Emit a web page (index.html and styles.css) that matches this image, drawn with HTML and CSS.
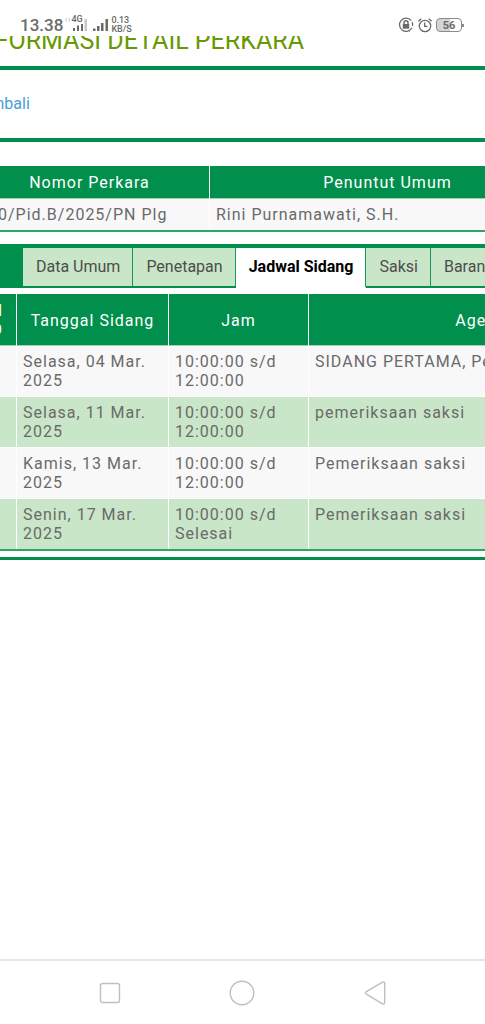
FILE: index.html
```html
<!DOCTYPE html>
<html lang="id">
<head>
<meta charset="utf-8">
<meta name="viewport" content="width=device-width, initial-scale=1">
<title>Informasi Detail Perkara</title>
<link rel="stylesheet" href="styles.css">
</head>
<body>
<header class="status">
  <span class="clock">13.38</span>
  <svg class="vib" width="6" height="6" viewBox="0 0 6 6"><path d="M1.5 1Q0 2.500 1.500 4.500M4 1Q5.500 2.500 4 4.500" fill="none" stroke="#c2c2c2"/></svg>
  <span class="cell">
    <span class="net">4G</span>
    <svg width="16" height="12" viewBox="0 0 16 12"><path d="M1 9h2v3H1zM5 6.500h2V12H5zM9 4h2v8H9z" fill="#686b68"/><path d="M12.500 0H15v12h-2.500z" fill="#c8c8c8"/></svg>
  </span>
  <svg class="bars" width="16" height="12" viewBox="0 0 16 12"><path d="M0 9.500h2.500V12H0zM4 7h2.500v5H4zM8 4h2.500v8H8zM12.500 0H15v12h-2.500z" fill="#686b68"/></svg>
  <span class="speed"><span>0.13</span><span>KB/S</span></span>
  <span class="status-right">
    <svg width="16" height="16" viewBox="0 0 16 16" fill="none" stroke="#686b68"><path d="M14 10.800A6.600 6.600 0 1 1 13.200 3.600" stroke-width="1.300"/><path d="M10.800 14.200l1-.6M14.200 5.200a7 7 0 0 1 .3 4" stroke-width="1.300"/><rect x="4.800" y="7" width="6.400" height="4.700" fill="#686b68" stroke="none"/><path d="M6 7.500V5.800a2 2 0 0 1 4 0v1.700" stroke-width="1.400"/></svg>
    <svg width="16" height="16" viewBox="0 0 16 16" fill="none" stroke="#686b68" stroke-width="1.300"><circle cx="8" cy="9" r="5.700"/><path d="M7.700 5.500v3.800h2.800M1.300 4.300l3-2.600M14.700 4.300l-3-2.600"/></svg>
    <span class="battery">56</span>
  </span>
</header>

<main class="view">
  <div class="page">
    <h1>INFORMASI DETAIL PERKARA</h1>
    <div class="back"><a href="#">Kembali</a></div>

    <table class="grid case">
      <colgroup><col class="c-nomor"><col class="c-umum"><col></colgroup>
      <thead><tr><th>Nomor Perkara</th><th>Penuntut Umum</th><th></th></tr></thead>
      <tbody><tr><td class="case-no">0/Pid.B/2025/PN Plg</td><td>Rini Purnamawati, S.H.</td><td></td></tr></tbody>
    </table>

    <nav class="tabs">
      <button type="button">Data Umum</button>
      <button type="button">Penetapan</button>
      <button type="button" class="active" aria-current="page">Jadwal Sidang</button>
      <button type="button">Saksi</button>
      <button type="button">Barang Bukti</button>
    </nav>

    <div class="panel">
      <table class="grid schedule">
        <colgroup><col class="c-no"><col class="c-date"><col class="c-time"><col></colgroup>
        <thead><tr><th>N<br>O</th><th>Tanggal Sidang</th><th>Jam</th><th>Agenda</th></tr></thead>
        <tbody>
          <tr><td></td><td>Selasa, 04 Mar. 2025</td><td>10:00:00 s/d 12:00:00</td><td>SIDANG PERTAMA, Pembacaan</td></tr>
          <tr><td></td><td>Selasa, 11 Mar. 2025</td><td>10:00:00 s/d 12:00:00</td><td>pemeriksaan saksi</td></tr>
          <tr><td></td><td>Kamis, 13 Mar. 2025</td><td>10:00:00 s/d 12:00:00</td><td>Pemeriksaan saksi</td></tr>
          <tr><td></td><td>Senin, 17 Mar. 2025</td><td>10:00:00 s/d Selesai</td><td>Pemeriksaan saksi</td></tr>
        </tbody>
      </table>
    </div>
  </div>
</main>

<footer class="softkeys">
  <button type="button" aria-label="Recent apps"><svg width="22" height="22" viewBox="0 0 22 22"><rect x="1.500" y="1.500" width="19" height="19" rx="2"/></svg></button>
  <button type="button" aria-label="Home"><svg width="26" height="26" viewBox="0 0 26 26"><circle cx="13" cy="13" r="11.800"/></svg></button>
  <button type="button" aria-label="Back"><svg width="22" height="26" viewBox="0 0 22 26"><path d="M18.500 2.200L2 11.800q-1.400 1 0 2L18.500 23.800q2.200.8 2.200-1.500V3.700q0-2.300-2.200-1.500z"/></svg></button>
</footer>
</body>
</html>
```
FILE: styles.css
```css
* { box-sizing: border-box; }

body {
  margin: 0;
  min-height: 100vh;
  display: flex;
  flex-direction: column;
  overflow-x: hidden;
  background: #fff;
  color: #6a6a6a;
  font: 16px/19px Roboto, "Liberation Sans", sans-serif;
}

button { font: inherit; color: inherit; border: 0; background: none; padding: 0; }

/* Status bar */
.status {
  height: 36px;
  padding: 14px 23px 0 20px;
  display: flex;
  align-items: center;
  color: #686b68;
}
.clock { font-weight: 500; font-size: 17px; }
.vib { margin: 0 0 10px 2px; }
.cell { display: flex; position: relative; padding-left: 1px; }
.net { position: absolute; left: 0; top: -4px; font-size: 9px; line-height: 9px; font-weight: 500; background: #fff; }
.bars { margin-left: 5px; }
.speed { display: flex; flex-direction: column; margin-left: 2px; font-size: 9px; line-height: 9px; font-weight: 500; }
.status-right { margin-left: auto; display: flex; align-items: center; gap: 3px; }
.battery {
  position: relative;
  width: 26px;
  height: 14px;
  border: 1px solid #8a8a8a;
  border-radius: 4px;
  background: linear-gradient(90deg, #d4d4d4 56%, #fff 56%);
  font-size: 11px;
  line-height: 13px;
  font-weight: 700;
  text-align: center;
}
.battery::after {
  content: "";
  position: absolute;
  right: -3px;
  top: 5px;
  width: 2px;
  height: 3px;
  background: #8a8a8a;
}

/* Horizontally panned page */
.view { flex: 1; overflow: hidden; }
.page { width: calc(100% + 208px); margin-left: -30px; }

h1 {
  margin: -10px 0 0;
  height: 40px;
  color: #669900;
  font-size: 25px;
  line-height: 30px;
  font-weight: 400;
}
.back {
  height: 76px;
  padding: 24px 2px;
  border-top: 4px solid #008f4c;
  border-bottom: 4px solid #008f4c;
}
.back a { color: #479fd3; font-size: 16px; line-height: 20px; text-decoration: none; }

/* Tables */
.grid {
  width: 100%;
  table-layout: fixed;
  border-collapse: separate;
  border-spacing: 0;
  border-bottom: 2px solid #2ca56c;
  letter-spacing: 1px;
}
.grid th {
  background: #008f4c;
  color: #fff;
  font-weight: 400;
  padding: 7px 6px 6px;
  border-right: 1px solid #fff;
  border-bottom: 1px solid #9fd3b5;
}
.grid td {
  background: #f8f8f8;
  padding: 6px;
  vertical-align: top;
  border-right: 1px solid #fff;
  border-bottom: 1px solid #fff;
}
.grid tbody tr:nth-child(even) td { background: #c9e6c8; }
.grid tbody tr:last-child td { border-bottom: 0; }

.case { margin-top: 24px; }
.c-nomor { width: 240px; }
.c-umum { width: 356px; }
.grid .case-no { padding-left: 28px; }

.tabs {
  display: flex;
  margin-top: 12px;
  padding-left: 53px;
  border-top: 4px solid #008f4c;
  background: linear-gradient(90deg, #008f4c 53px, #fff 53px);
}
.tabs button {
  height: 40px;
  padding: 0 12px 2px 13px;
  background: #c9e6c8;
  color: #4d4d4d;
  white-space: nowrap;
  border-right: 1px solid #14985a;
  border-bottom: 2px solid #008f4c;
}
.tabs .active { background: #fff; color: #000; font-weight: 700; border-bottom-color: #fff; }

.panel { padding: 6px 0 6px 8px; border-bottom: 3px solid #008f4c; }
.c-no { width: 39px; }
.c-date { width: 152px; }
.c-time { width: 140px; }
.schedule thead th { height: 52px; }

/* Navigation keys */
.softkeys {
  height: 65px;
  padding: 0 44px;
  display: grid;
  grid-template-columns: repeat(3, 1fr);
  border-top: 2px solid #e3e8e7;
}
.softkeys button { display: flex; align-items: center; justify-content: center; }
.softkeys svg { fill: none; stroke: #bfbfbf; stroke-width: 1.4px; }
```
